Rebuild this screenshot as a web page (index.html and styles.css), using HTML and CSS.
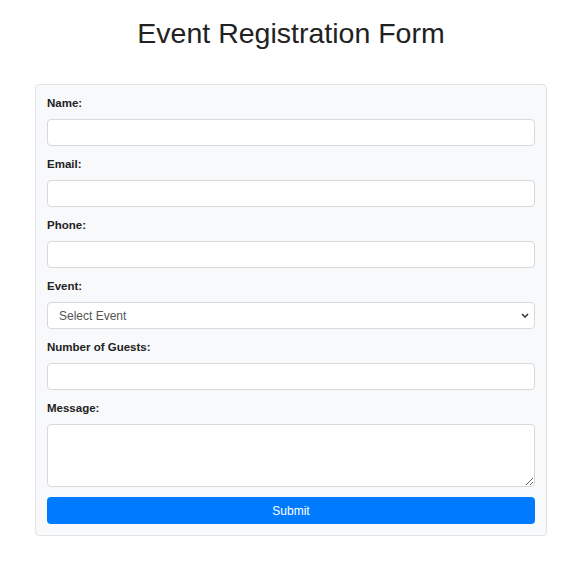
FILE: index.html
```html
<!DOCTYPE html>
<html lang="en">

<head>
    <meta charset="UTF-8">
    <meta name="viewport" content="width=device-width, initial-scale=1.0">
    <title>Event Registration Form</title>
    <link rel="stylesheet" href="styles.css">
</head>

<body>

    <div class="page">
        <h1>Event Registration Form</h1>

        <form class="reg-form">
            <label for="name">Name:</label>
            <input type="text" id="name">

            <label for="email">Email:</label>
            <input type="email" id="email">

            <label for="phone">Phone:</label>
            <input type="tel" id="phone">

            <label for="event">Event:</label>
            <div class="select-wrap">
                <select id="event">
                    <option>Select Event</option>
                    <option>Conference</option>
                    <option>Workshop</option>
                    <option>Seminar</option>
                </select>
                <svg class="chevron" width="8" height="5" viewBox="0 0 8 5">
                    <path d="M1 1 L4 4 L7 1" fill="none" stroke="#333" stroke-width="1.5" />
                </svg>
            </div>

            <label for="guests">Number of Guests:</label>
            <input type="number" id="guests">

            <label for="message">Message:</label>
            <textarea id="message"></textarea>

            <button type="submit">Submit</button>
        </form>
    </div>

</body>

</html>
```

FILE: styles.css
```css
body {
    margin: 0;
    padding: 0;
    font-family: "Liberation Sans", Arial, sans-serif;
    color: #333;
    background-color: #fff;
}

.page {
    width: 512px;
    margin-left: 35px;
    padding-top: 17px;
}

h1 {
    margin: 0 0 35px;
    font-size: 28.5px;
    line-height: 32px;
    font-weight: normal;
    text-align: center;
    color: #222;
}

.reg-form {
    display: flex;
    flex-direction: column;
    background-color: #f8f9fa;
    border: 1px solid #e3e3e3;
    border-radius: 4px;
    padding: 10px 11px 11px;
}

.reg-form label {
    font-size: 11.5px;
    line-height: 17px;
    font-weight: bold;
    color: #222;
    margin-bottom: 7px;
}

.reg-form input,
.reg-form select,
.reg-form textarea {
    box-sizing: border-box;
    width: 100%;
    height: 27px;
    margin: 0 0 10px;
    padding: 0 11px;
    font-family: inherit;
    font-size: 12px;
    color: #555;
    background-color: #fff;
    border: 1px solid #d9d9d9;
    border-radius: 4px;
}

.select-wrap {
    position: relative;
}

.reg-form select {
    appearance: none;
    -webkit-appearance: none;
    display: block;
}

.chevron {
    position: absolute;
    right: 6px;
    top: 11px;
    pointer-events: none;
}

.reg-form textarea {
    height: 63px;
    padding: 6px 11px;
}

.reg-form button {
    height: 27px;
    border: none;
    border-radius: 4px;
    background-color: #007bff;
    color: #fff;
    font-family: inherit;
    font-size: 12px;
    cursor: pointer;
}

.reg-form button:hover {
    background-color: #0069d9;
}
```
